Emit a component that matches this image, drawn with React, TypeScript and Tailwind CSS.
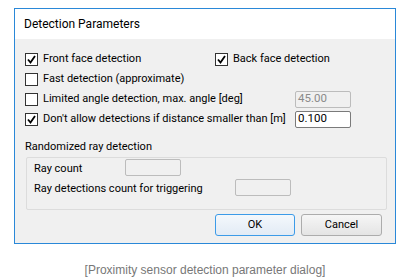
import React from 'react';

const ui = { fontFamily: 'Roboto, "Noto Sans", sans-serif' };

const Check = ({ checked }: { checked?: boolean }) => (
  <span className="flex h-[13px] w-[13px] shrink-0 items-center justify-center border border-[#333333] bg-white">
    {checked && (
      <svg width="9" height="9" viewBox="0 0 9 9">
        <path d="M1 4.5 L3.5 7.5 L8 1" fill="none" stroke="#000" strokeWidth="1.8" />
      </svg>
    )}
  </span>
);

const CheckRow = ({ label, checked }: { label: string; checked?: boolean }) => (
  <div className="flex h-5 items-center gap-[5px]">
    <Check checked={checked} />
    <span className="whitespace-nowrap">{label}</span>
  </div>
);

const Field = ({ value, disabled }: { value?: string; disabled?: boolean }) => (
  <div
    className={
      'flex h-[17px] w-[56px] shrink-0 items-center rounded-[2px] border px-[2px] text-[11.5px] leading-none ' +
      (disabled ? 'border-[#bcbcbc] bg-[#f0f0f0] text-[#8a8a8a]' : 'border-[#7a7a7a] bg-white text-black')
    }
  >
    {value}
  </div>
);

export default function App() {
  return (
    <div className="h-[280px] w-[414px] bg-white" style={ui}>
      <div className="ml-[14px] pt-[8px]">
        <div className="flex h-[236px] w-[382px] flex-col border border-[#2a88d8] bg-[#f0f0f0] text-[11px] text-black">
          <div className="flex h-[30px] items-center bg-white pl-[9px] text-[12px]">Detection Parameters</div>

          <div className="flex flex-col pl-[10px] pt-[10px]">
            <div className="flex">
              <div className="w-[190px]">
                <CheckRow label="Front face detection" checked />
              </div>
              <CheckRow label="Back face detection" checked />
            </div>
            <CheckRow label="Fast detection (approximate)" />
            <div className="flex h-5 items-center">
              <div className="w-[270px] shrink-0">
                <CheckRow label="Limited angle detection, max. angle [deg]" />
              </div>
              <Field value="45.00" disabled />
            </div>
            <div className="flex h-5 items-center">
              <div className="w-[270px] shrink-0">
                <CheckRow label="Don't allow detections if distance smaller than [m]" checked />
              </div>
              <Field value="0.100" />
            </div>

            <div className="mt-[8px] flex h-5 items-center">Randomized ray detection</div>
            <div className="ml-[1px] mr-[8px] flex h-[53px] flex-col rounded-[2px] border border-[#dcdcdc] pl-[7px] pt-[1px]">
              <div className="flex h-5 items-start">
                <span className="w-[91px] leading-5">Ray count</span>
                <Field disabled />
              </div>
              <div className="flex h-5 items-start">
                <span className="w-[201px] leading-5">Ray detections count for triggering</span>
                <Field disabled />
              </div>
            </div>

            <div className="mr-[13px] mt-[4px] flex justify-end gap-[6px]">
              <button className="flex h-[22px] w-[80px] items-center justify-center rounded-[3px] border border-[#3c9be8] bg-gradient-to-b from-[#f4f8fc] to-[#e2ebf5]">
                OK
              </button>
              <button className="flex h-[22px] w-[81px] items-center justify-center rounded-[3px] border border-[#acacac] bg-gradient-to-b from-[#f6f6f6] to-[#e4e4e4]">
                Cancel
              </button>
            </div>
          </div>
        </div>
        <div
          className="mt-[17px] w-[382px] text-center text-[12px] text-[#777777]"
          style={{ fontFamily: '"Liberation Sans", Arial, sans-serif' }}
        >
          [Proximity sensor detection parameter dialog]
        </div>
      </div>
    </div>
  );
}
